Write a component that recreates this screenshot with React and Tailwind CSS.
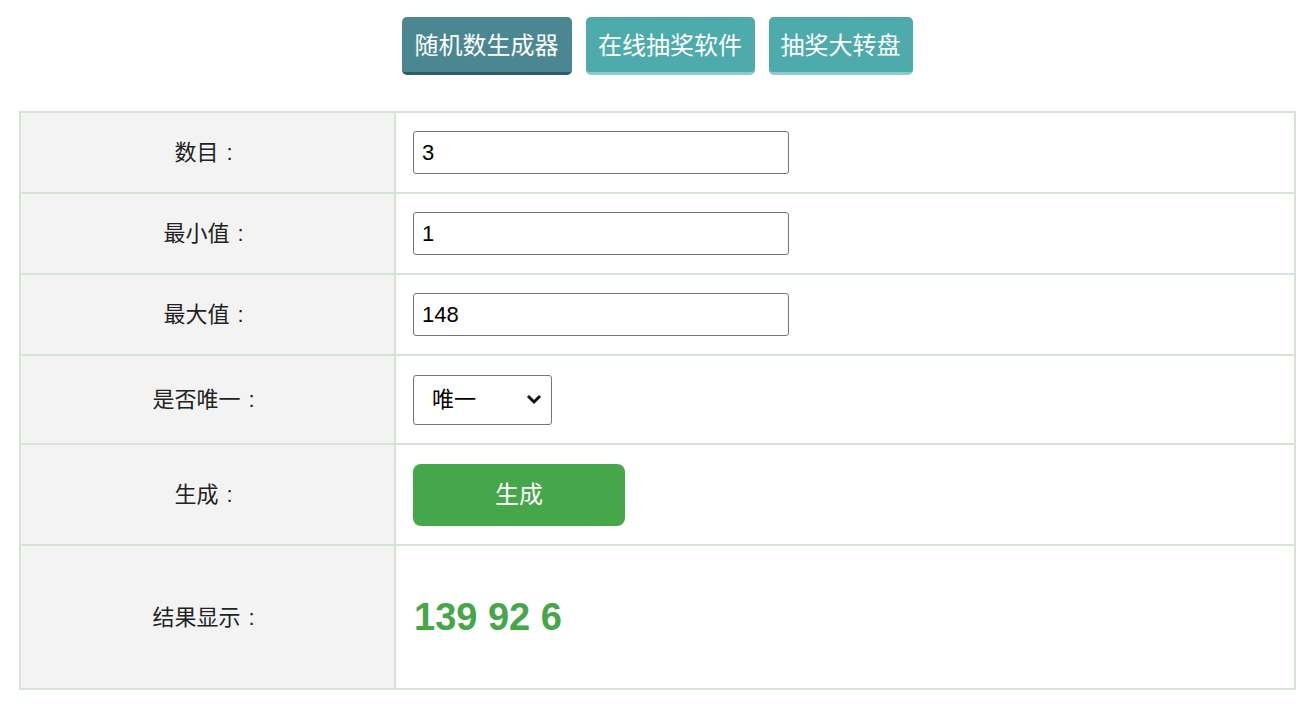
const tabs = [
  { label: "随机数生成器", active: true, w: "w-[170px]" },
  { label: "在线抽奖软件", active: false, w: "w-[169px]" },
  { label: "抽奖大转盘", active: false, w: "w-[144px]" },
];

const font = { fontFamily: '"Liberation Sans", Arial, "Noto Sans CJK SC", sans-serif' };

function Label({ children }) {
  return (
    <td className="bg-[#f3f3f3] border-2 border-[#d5e4d5] text-center text-[22px] text-[#222] w-[375px]">
      {children}
      <span className="inline-block w-[22px] text-center">:</span>
    </td>
  );
}

export default function App() {
  return (
    <div className="bg-white min-h-[709px] pt-[17px]" style={font}>
      <div className="flex justify-center gap-[14px] pl-[2px]">
        {tabs.map((t) => (
          <button
            key={t.label}
            className={`${t.w} h-[58px] rounded-[5px] text-white text-[24px] pt-[3px] ${
              t.active
                ? "bg-[#4a8791] border-b-[3px] border-[#2f5f66]"
                : "bg-[#4dabab] border-b-[3px] border-[#8fcaca]"
            }`}
          >
            {t.label}
          </button>
        ))}
      </div>

      <table className="mt-[36px] ml-[19px] w-[1277px] border-collapse border-2 border-[#d5e4d5]">
        <tbody>
          <tr className="h-[81px]">
            <Label>数目</Label>
            <td className="border-2 border-[#d5e4d5] pl-[17px]">
              <input
                defaultValue="3"
                className="w-[376px] h-[43px] border border-[#767676] rounded-[3px] px-[8px] text-[22px] text-black"
              />
            </td>
          </tr>
          <tr className="h-[81px]">
            <Label>最小值</Label>
            <td className="border-2 border-[#d5e4d5] pl-[17px]">
              <input
                defaultValue="1"
                className="w-[376px] h-[43px] border border-[#767676] rounded-[3px] px-[8px] text-[22px] text-black"
              />
            </td>
          </tr>
          <tr className="h-[81px]">
            <Label>最大值</Label>
            <td className="border-2 border-[#d5e4d5] pl-[17px]">
              <input
                defaultValue="148"
                className="w-[376px] h-[43px] border border-[#767676] rounded-[3px] px-[8px] text-[22px] text-black"
              />
            </td>
          </tr>
          <tr className="h-[89px]">
            <Label>是否唯一</Label>
            <td className="border-2 border-[#d5e4d5] pl-[17px]">
              <div className="relative w-[139px] h-[50px]">
                <select className="appearance-none w-full h-full border border-[#767676] rounded-[3px] pl-[18px] text-[22px] text-black bg-white">
                  <option>唯一</option>
                  <option>不唯一</option>
                </select>
                <svg
                  className="absolute right-[10px] top-[18px] pointer-events-none"
                  width="16"
                  height="12"
                  viewBox="0 0 16 12"
                >
                  <path d="M2 3 L8 9 L14 3" stroke="#111" strokeWidth="3" fill="none" />
                </svg>
              </div>
            </td>
          </tr>
          <tr className="h-[101px]">
            <Label>生成</Label>
            <td className="border-2 border-[#d5e4d5] pl-[17px]">
              <button className="w-[212px] h-[62px] rounded-[8px] bg-[#46a64a] text-white text-[24px]">
                生成
              </button>
            </td>
          </tr>
          <tr className="h-[144px]">
            <Label>结果显示</Label>
            <td className="border-2 border-[#d5e4d5] pl-[18px]">
              <span className="text-[#46a64a] text-[38px] font-bold">139 92 6</span>
            </td>
          </tr>
        </tbody>
      </table>
    </div>
  );
}
